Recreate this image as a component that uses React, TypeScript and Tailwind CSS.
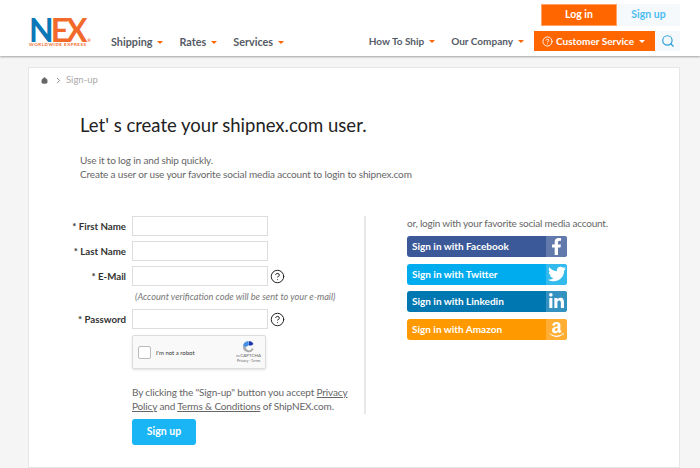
import { Home, ChevronRight, Search, CircleHelp } from "lucide-react"
import { FaFacebookF, FaTwitter, FaLinkedinIn, FaAmazon } from "react-icons/fa"

const font = { fontFamily: "Lato, 'Open Sans', sans-serif" }

const leftNav = ["Shipping", "Rates", "Services"]
const rightNav = ["How To Ship", "Our Company"]

const fields = [
  { label: "First Name", help: false },
  { label: "Last Name", help: false },
  { label: "E-Mail", help: true },
]

const socials = [
  { label: "Sign in with Facebook", bg: "bg-[#3b5998]", box: "bg-[#6279ab]", icon: <FaFacebookF size={17} /> },
  { label: "Sign in with Twitter", bg: "bg-[#00aced]", box: "bg-[#33bbee]", icon: <FaTwitter size={18} /> },
  { label: "Sign in with Linkedin", bg: "bg-[#0077b0]", box: "bg-[#3392c0]", icon: <FaLinkedinIn size={17} /> },
  { label: "Sign in with Amazon", bg: "bg-[#ff9900]", box: "bg-[#ffad33]", icon: <FaAmazon size={17} /> },
]

function Caret({ white }: { white?: boolean }) {
  return (
    <span
      className={`ml-[5px] inline-block h-0 w-0 border-x-[3px] border-t-[3px] border-x-transparent ${white ? "border-t-white" : "border-t-[#ff6600]"}`}
    />
  )
}

function FieldRow({ label, help }: { label: string; help: boolean }) {
  return (
    <div className="flex h-[20px] items-center">
      <label className="w-[98px] pr-[6px] text-right text-[9.7px] font-bold text-[#333]">* {label}</label>
      <input className="h-[20px] w-[136px] border border-[#ddd] bg-white" />
      {help && <CircleHelp size={15} strokeWidth={1.6} className="ml-[2px] text-[#222]" />}
    </div>
  )
}

export default function App() {
  return (
    <div className="flex h-[468px] flex-col overflow-hidden bg-[#f5f5f5]" style={font}>
      <header className="flex h-[56px] justify-between bg-white pl-[28px] pr-[20px] shadow-[0_1px_2px_rgba(0,0,0,0.35)]">
        <div className="flex items-start">
          <div className="mt-[16px] w-[83px] pl-[1px]">
            <div className="text-[32px] font-bold leading-[27px] tracking-[-3px]">
              <span className="text-[#0a78b8]">N</span>
              <span className="text-[#f26a2b]">EX</span>
              <span className="ml-[3px] text-[4px] leading-none tracking-normal text-[#f26a2b]">®</span>
            </div>
            <div className="whitespace-nowrap text-[4.5px] font-bold leading-[4px] tracking-[0.5px] text-[#f26a2b]">WORLDWIDE EXPRESS</div>
          </div>
          <nav className="mt-[34px] flex gap-[16px] text-[10.8px] font-bold text-[#555b66]">
            {leftNav.map((item) => (
              <span key={item} className="flex items-center whitespace-nowrap">
                {item}
                <Caret />
              </span>
            ))}
          </nav>
        </div>
        <div className="flex flex-col items-end pt-[4px]">
          <div className="flex h-[22px] text-[10.5px] font-bold">
            <button className="w-[76px] border border-[#ffa366] bg-[#ff6600] text-white">Log in</button>
            <button className="w-[63px] bg-[#f5f9fb] text-[#4dbdf0]">Sign up</button>
          </div>
          <div className="mt-[5px] flex h-[20px] items-center text-[10px] font-bold text-[#555b66]">
            <div className="flex gap-[16px]">
              {rightNav.map((item) => (
                <span key={item} className="flex items-center whitespace-nowrap">
                  {item}
                  <Caret />
                </span>
              ))}
            </div>
            <button className="ml-[10px] flex h-[20px] w-[121px] items-center bg-[#ff6600] pl-[8px] text-white">
              <CircleHelp size={11} className="mr-[3px]" />
              <span className="whitespace-nowrap">Customer Service</span>
              <Caret white />
            </button>
            <div className="flex h-[20px] w-[25px] items-center justify-center bg-[#f5f9fb]">
              <Search size={14} className="text-[#2a9fd8]" />
            </div>
          </div>
        </div>
      </header>

      <main className="ml-[28px] mr-[20px] mt-[11px] flex-1 border border-[#e6e6e6] bg-white">
        <div className="flex h-[24px] items-center pl-[12px] pt-[1px] text-[9.5px] text-[#aaa]">
          <Home size={7} className="text-[#666]" fill="#666" />
          <ChevronRight size={9} className="ml-[6px] text-[#666]" />
          <span className="ml-[3px]">Sign-up</span>
        </div>

        <div className="ml-[51px] mt-[21px]">
          <h1 className="text-[18.5px] leading-[24px] text-[#222]">Let' s create your shipnex.com user.</h1>
          <p className="mt-[16px] text-[10px] leading-[14px] tracking-[-0.15px] text-[#666]">
            Use it to log in and ship quickly.
            <br />
            Create a user or use your favorite social media account to login to shipnex.com
          </p>
        </div>

        <div className="ml-[5px] mt-[35px] flex">
          <div className="h-[198px] w-[332px] border-r-2 border-[#e8e8e8]">
            <div className="flex flex-col gap-[5px]">
              {fields.map((f) => (
                <FieldRow key={f.label} label={f.label} help={f.help} />
              ))}
            </div>
            <p className="ml-[101px] mt-[6px] text-[9.2px] italic leading-[10px] text-[#777]">
              (Account verification code will be sent to your e-mail)
            </p>
            <div className="mt-[7px]">
              <FieldRow label="Password" help />
            </div>
            <div className="ml-[98px] mt-[6px] flex h-[34px] w-[134px] items-center rounded-[2px] border border-[#ddd] bg-[#f9f9f9] pl-[5px] shadow-sm">
              <span className="h-[13px] w-[13px] rounded-[2px] border border-[#bbb] bg-white" />
              <span className="ml-[5px] text-[6px] text-[#333]">I'm not a robot</span>
              <div className="ml-auto mr-[4px] flex flex-col items-center">
                <svg width="15" height="13" viewBox="0 0 15 13" fill="none">
                  <path d="M7.5 1a5.5 5.5 0 0 1 5 3l-2 1.5H8V1z" fill="#1c3aa9" />
                  <path d="M2 6.5A5.5 5.5 0 0 1 7.5 1L8 5 5 7z" fill="#4a90e2" />
                  <path d="M2 6.5 5 6.5A3 3 0 0 0 11 8l1.5 1A5.5 5.5 0 0 1 2 6.5z" fill="#aaa" />
                </svg>
                <span className="text-[4.5px] leading-[6px] text-[#666]">reCAPTCHA</span>
                <span className="text-[3.5px] leading-[5px] text-[#666]">Privacy - Terms</span>
              </div>
            </div>
            <p className="ml-[98px] mt-[16px] w-[225px] text-[10px] leading-[14px] tracking-[-0.15px] text-[#666]">
              By clicking the "Sign-up" button you accept <span className="underline">Privacy Policy</span> and{" "}
              <span className="underline">Terms &amp; Conditions</span> of ShipNEX.com.
            </p>
            <button className="ml-[98px] mt-[6px] h-[26px] w-[64px] rounded-[3px] bg-[#1ab5f5] text-[10.5px] font-bold text-white">
              Sign up
            </button>
          </div>

          <div className="ml-[41px]">
            <p className="whitespace-nowrap pt-[1px] text-[10px] leading-[13px] tracking-[-0.2px] text-[#666]">
              or, login with your favorite social media account.
            </p>
            <div className="mt-[6px] flex flex-col gap-[6.5px]">
              {socials.map((s) => (
                <a
                  key={s.label}
                  className={`flex h-[21px] w-[160px] items-center justify-between overflow-hidden rounded-[3px] pl-[5px] text-[10px] font-bold text-white ${s.bg}`}
                >
                  {s.label}
                  <span className={`flex h-full w-[21px] items-center justify-center ${s.box}`}>{s.icon}</span>
                </a>
              ))}
            </div>
          </div>
        </div>
      </main>
    </div>
  )
}
